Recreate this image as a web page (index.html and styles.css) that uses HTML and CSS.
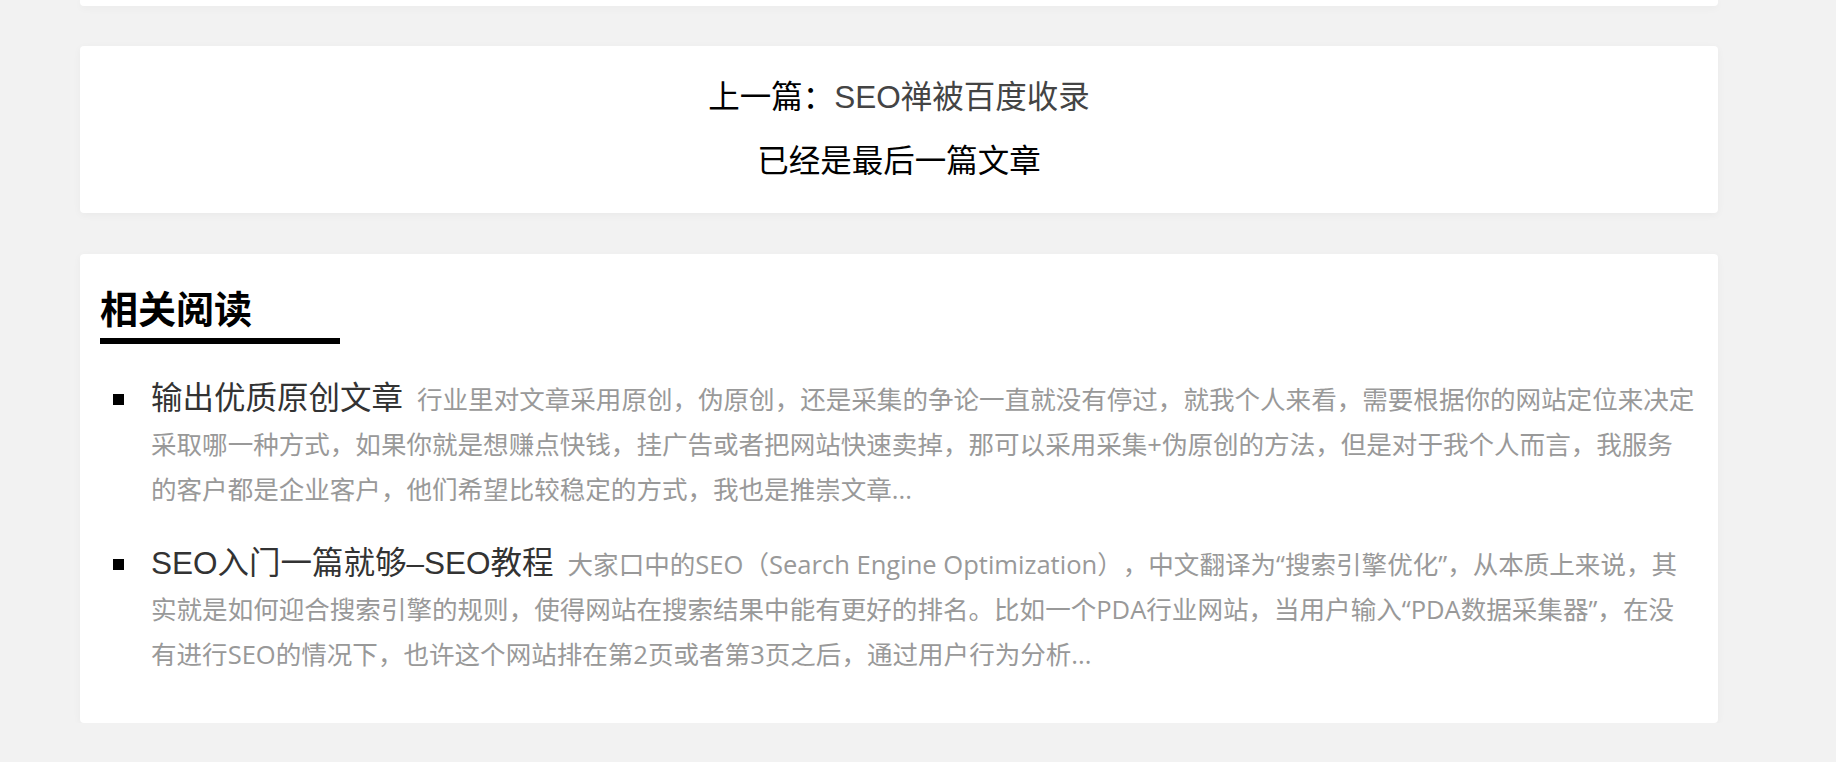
FILE: index.html
```html
<!DOCTYPE html>
<html lang="zh-CN">
<head>
<meta charset="utf-8">
<title>相关阅读</title>
<link rel="stylesheet" href="styles.css">
</head>
<body>
<div class="wrap">
  <div class="card card-top"></div>

  <div class="card card-nav">
    <p class="nav-line">上一篇：<a class="nav-link" href="#">SEO禅被百度收录</a></p>
    <p class="nav-line">已经是最后一篇文章</p>
  </div>

  <div class="card card-related">
    <h2 class="related-title">相关阅读</h2>
    <ul class="related-list">
      <li class="related-item">
        <span class="bullet"></span>
        <div class="item-body"><a class="item-title" href="#">输出优质原创文章</a><span class="item-desc">行业里对文章采用原创，伪原创，还是采集的争论一直就没有停过，就我个人来看，需要根据你的网站定位来决定采取哪一种方式，如果你就是想赚点快钱，挂广告或者把网站快速卖掉，那可以采用采集+伪原创的方法，但是对于我个人而言，我服务的客户都是企业客户，他们希望比较稳定的方式，我也是推崇文章...</span></div>
      </li>
      <li class="related-item">
        <span class="bullet"></span>
        <div class="item-body"><a class="item-title" href="#">SEO入门一篇就够–SEO教程</a><span class="item-desc">大家口中的SEO（Search Engine Optimization），中文翻译为“搜索引擎优化”，从本质上来说，其实就是如何迎合搜索引擎的规则，使得网站在搜索结果中能有更好的排名。比如一个PDA行业网站，当用户输入“PDA数据采集器”，在没有进行SEO的情况下，也许这个网站排在第2页或者第3页之后，通过用户行为分析...</span></div>
      </li>
    </ul>
  </div>
</div>
</body>
</html>
```

FILE: styles.css
```css
html, body {
  margin: 0;
  padding: 0;
}

body {
  background: #f2f2f2;
  font-family: "Liberation Sans", "Noto Sans CJK SC", sans-serif;
  color: #000;
  text-spacing-trim: space-all;
}

.wrap {
  margin-left: 80px;
  width: 1638px;
}

.card {
  background: #fff;
  border-radius: 4px;
  box-shadow: 0 2px 8px rgba(0, 0, 0, 0.04);
}

.card-top {
  height: 6px;
  border-radius: 0 0 4px 4px;
}

.card-nav {
  margin-top: 40px;
  padding: 29px 20px;
  display: flex;
  flex-direction: column;
  gap: 19px;
  text-align: center;
}

.nav-line {
  margin: 0;
  font-size: 31.5px;
  line-height: 45px;
  color: #000;
}

.nav-link {
  color: #444;
  text-decoration: none;
}

.card-related {
  margin-top: 41px;
  padding: 28px 20px 46px;
}

.related-title {
  margin: 0;
  width: 240px;
  font-size: 38px;
  line-height: 56px;
  font-weight: bold;
  color: #000;
  border-bottom: 6px solid #000;
}

.related-list {
  list-style: none;
  margin: 33px 0 0;
  padding: 0;
  display: flex;
  flex-direction: column;
  gap: 29.5px;
}

.related-item {
  display: grid;
  grid-template-columns: 51px 1fr;
  align-items: start;
}

.bullet {
  display: block;
  width: 11px;
  height: 11px;
  margin: 17px 0 0 13px;
  background: #000;
}

.item-body {
  font-family: "Open Sans", "Noto Sans CJK SC", sans-serif;
  line-height: 45px;
  font-size: 25.56px;
}

.item-title {
  font-family: "Liberation Sans", "Noto Sans CJK SC", sans-serif;
  font-size: 31.5px;
  line-height: 31.5px;
  color: #333;
  text-decoration: none;
}

.item-desc {
  margin-left: 14px;
  color: #999;
}
```
